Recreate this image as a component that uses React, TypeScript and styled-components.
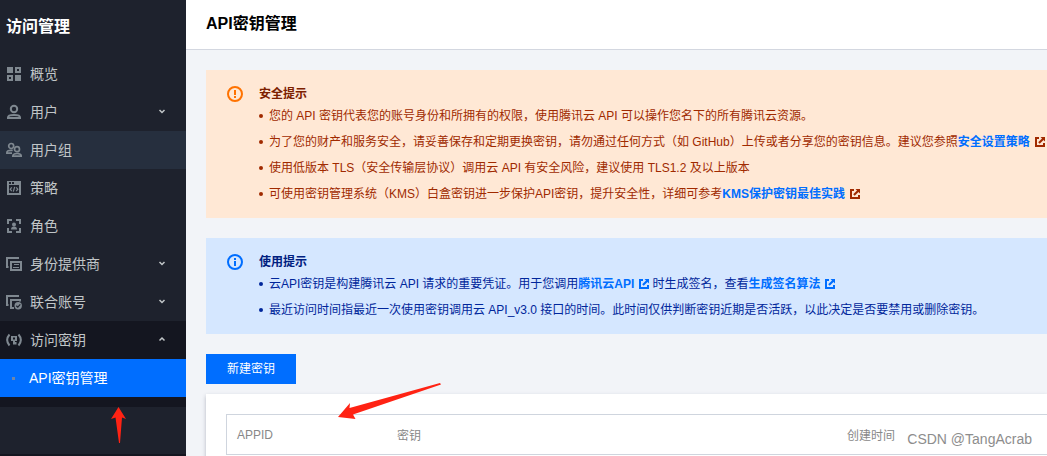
import React from "react";
import styled, { createGlobalStyle } from "styled-components";

const GlobalStyle = createGlobalStyle`
  * { box-sizing: border-box; }
  body {
    margin: 0;
    background: #f2f4f8;
    font-family: "Liberation Sans", "Noto Sans CJK SC", sans-serif;
    font-size: 12px;
  }
  ul { margin: 0; padding: 0; list-style: none; }
`;

const Shell = styled.div`
  position: relative;
  display: flex;
  height: 100vh;
  overflow: hidden;
`;

const Sidebar = styled.nav`
  flex: 0 0 186px;
  display: flex;
  flex-direction: column;
  background: #1e222d;
  color: #c1c6c8;
`;

const SidebarTitle = styled.h2`
  margin: 0;
  padding: 15px 6px 16px;
  font-size: 16px;
  line-height: 24px;
  font-weight: bold;
  color: #fff;
`;

const SidebarFoot = styled.div`
  margin-top: auto;
  height: 2px;
  background: #141620;
`;

const MenuItem = styled.li<{ $open?: boolean }>`
  background: ${(p) => (p.$open ? "#141620" : "transparent")};
  padding-bottom: ${(p) => (p.$open ? "10px" : "0")};
`;

const MenuLink = styled.a<{ $tone?: "hover" | "active" }>`
  display: flex;
  align-items: center;
  gap: 8px;
  height: 38px;
  padding: 0 18px 0 6px;
  font-size: 14px;
  line-height: 20px;
  text-decoration: none;
  color: ${(p) => (p.$tone === "active" ? "#fff" : "inherit")};
  background: ${(p) =>
    p.$tone === "active" ? "#006eff" : p.$tone === "hover" ? "#262f3e" : "transparent"};
`;

const MenuIcon = styled.svg`
  flex: none;
  width: 16px;
  height: 16px;
  color: #7f8890;
`;

const Chevron = styled.svg`
  width: 12px;
  height: 12px;
  margin-left: auto;
`;

const Bullet = styled.span`
  flex: 0 0 15px;
  display: flex;
  justify-content: center;
  &::before {
    content: "";
    width: 3px;
    height: 3px;
    background: #6f86a8;
  }
`;

const Main = styled.main`
  flex: 1;
  min-width: 0;
`;

const PageHeader = styled.header`
  padding: 12px 20px 13px;
  background: #fff;
  border-bottom: 1px solid #d3d7e0;
`;

const PageTitle = styled.h1`
  margin: 0;
  font-size: 16px;
  line-height: 24px;
  font-weight: bold;
  color: #000;
`;

const Content = styled.div`
  display: flex;
  flex-direction: column;
  gap: 20px;
  padding: 20px 0 0 20px;
`;

const Alert = styled.section<{ $kind: "warning" | "info" }>`
  display: flex;
  gap: 16px;
  padding: 12px 0 14px 21px;
  background: ${(p) => (p.$kind === "warning" ? "#ffe8d5" : "#d5e7ff")};
  color: ${(p) => (p.$kind === "warning" ? "#a02a00" : "#00269b")};
  white-space: nowrap;
`;

const AlertIcon = styled.svg`
  flex: none;
  width: 16px;
  height: 16px;
  margin-top: 4px;
`;

const AlertTitle = styled.h3<{ $kind: "warning" | "info" }>`
  margin: 0;
  font-size: 12px;
  line-height: 24px;
  font-weight: bold;
  color: ${(p) => (p.$kind === "warning" ? "#7c2000" : "#002080")};
`;

const AlertList = styled.ul`
  && {
    display: flex;
    flex-direction: column;
    gap: 6px;
  }
`;

const AlertItem = styled.li`
  display: flex;
  align-items: center;
  line-height: 20px;
  &::before {
    content: "";
    flex: none;
    width: 4px;
    height: 4px;
    margin-right: 6px;
    border-radius: 50%;
    background: currentColor;
  }
`;

const DocLink = styled.a`
  font-weight: bold;
  text-decoration: none;
  color: #006eff;
`;

const LinkIcon = styled.svg<{ $kind: "warning" | "info" }>`
  width: 10px;
  height: 10px;
  margin: 0 3px 0 5px;
  vertical-align: -1px;
  color: ${(p) => (p.$kind === "warning" ? "#a02a00" : "#006eff")};
`;

const PrimaryButton = styled.button`
  align-self: flex-start;
  height: 30px;
  padding: 0 21px;
  border: 0;
  background: #006eff;
  color: #fff;
  font-family: inherit;
  font-size: 12px;
  line-height: 28px;
`;

const Card = styled.section`
  margin-top: -10px;
  padding: 20px 0 20px 20px;
  background: #fff;
  box-shadow: 0 2px 4px rgba(54, 58, 80, 0.32);
`;

const KeyTable = styled.table`
  width: 100%;
  border-collapse: separate;
  border-spacing: 0;
  table-layout: fixed;
  border-top: 1px solid #cfd5de;
  border-left: 1px solid #cfd5de;
`;

const HeadCell = styled.th<{ $width?: string }>`
  width: ${(p) => p.$width ?? "auto"};
  height: 40px;
  padding: 0 10px;
  border-bottom: 1px solid #cfd5de;
  text-align: left;
  font-weight: normal;
  color: #888;
`;

const Arrow = styled.svg<{ $left: number; $top: number }>`
  position: absolute;
  left: ${(p) => p.$left}px;
  top: ${(p) => p.$top}px;
  fill: #ff2314;
  pointer-events: none;
`;

const Watermark = styled.span`
  position: absolute;
  right: 15px;
  bottom: 9px;
  font-size: 14px;
  line-height: 16px;
  color: #8d8d8d;
`;

const icons: Record<string, React.ReactNode> = {
  overview: (
    <path
      fill="currentColor"
      fillRule="evenodd"
      d="M1 1h6v6H1zM9 1h6v6H9zm2 2v2h2V3zM1 9h6v6H1zm2 2v2h2v-2zM9 9h6v6H9z"
    />
  ),
  user: (
    <g fill="none" stroke="currentColor" strokeWidth="2">
      <circle cx="8" cy="5" r="3.200" />
      <path d="M2 14v-.6C2 11.700 4.200 11 8 11s6 .7 6 2.400v.6z" />
    </g>
  ),
  group: (
    <g fill="none" stroke="currentColor" strokeWidth="1.700">
      <circle cx="5.200" cy="4" r="2.500" />
      <path d="M6 11.200H.9v-.7C.9 9 2.500 8.300 5.200 8.300h1.500" />
      <circle cx="11" cy="7.200" r="2.500" />
      <path d="M6.800 14.200c0-2 1.700-2.700 4.300-2.700s4.100.7 4.100 2.700z" />
    </g>
  ),
  policy: (
    <>
      <path
        fill="currentColor"
        fillRule="evenodd"
        d="M1 1h14v14H1zM3 2v2h2V2zM6 2v2h2V2zM3 5v8h10V5z"
      />
      <path
        d="M5.800 7.300 4.200 9.200l1.600 1.900M10.200 7.300l1.600 1.900-1.600 1.900M8.700 6.800 7.300 11.600"
        fill="none"
        stroke="currentColor"
        strokeWidth="1.200"
      />
    </>
  ),
  role: (
    <>
      <path
        d="M6 2H2v4M10 2h4v4M2 10v4h4M14 10v4h-4"
        fill="none"
        stroke="currentColor"
        strokeWidth="2"
      />
      <circle cx="8" cy="6.500" r="2" fill="currentColor" />
      <path d="M5 11.500c0-2 1-3 3-3s3 1 3 3z" fill="currentColor" />
    </>
  ),
  provider: (
    <g fill="none" stroke="currentColor" strokeWidth="2">
      <path d="M2.500 11H1V2h12" />
      <path d="M5 6h10v8H5z" />
      <path d="M8 8.500h5M7 11.500h6" strokeWidth="1" />
    </g>
  ),
  federated: (
    <>
      <g fill="none" stroke="currentColor" strokeWidth="2">
        <path d="M2.500 11H1V2h12" />
        <path d="M8 14H5V6h9v1.500" />
      </g>
      <circle cx="12.200" cy="11.700" r="3.700" fill="currentColor" />
      <path d="m10.300 11.700 1.500 1.400 2.500-2.700" fill="none" stroke="#1e222d" strokeWidth="1.200" />
    </>
  ),
  key: (
    <>
      <path
        d="M3.500 2.500c-3 3.500-3 7.500 0 11M12.500 2.500c3 3.500 3 7.500 0 11"
        fill="none"
        stroke="currentColor"
        strokeWidth="2"
      />
      <path
        fill="currentColor"
        fillRule="evenodd"
        d="M5 4h6v5H9v1h1.500v2.500H7V9H5zm2 1.500v2h2v-2z"
      />
    </>
  ),
};

type Item = {
  icon: string;
  label: string;
  expandable?: boolean;
  hovered?: boolean;
  child?: string;
};

const menu: Item[] = [
  { icon: "overview", label: "概览" },
  { icon: "user", label: "用户", expandable: true },
  { icon: "group", label: "用户组", hovered: true },
  { icon: "policy", label: "策略" },
  { icon: "role", label: "角色" },
  { icon: "provider", label: "身份提供商", expandable: true },
  { icon: "federated", label: "联合账号", expandable: true },
  { icon: "key", label: "访问密钥", expandable: true, child: "API密钥管理" },
];

function ExternalIcon({ kind }: { kind: "warning" | "info" }) {
  return (
    <LinkIcon $kind={kind} viewBox="0 0 10 10" aria-hidden="true">
      <path
        d="M4 0v2H2v6h6V6h2v4H0V0zM5.500 0H10v4.500L8.500 3 4.700 6.800 3.200 5.300 7 1.500z"
        fill="currentColor"
      />
    </LinkIcon>
  );
}

function StatusIcon({ kind }: { kind: "warning" | "info" }) {
  const color = kind === "warning" ? "#ff7200" : "#006eff";
  return (
    <AlertIcon viewBox="0 0 16 16" aria-hidden="true">
      <circle cx="8" cy="8" r="7" fill="none" stroke={color} strokeWidth="2" />
      {kind === "warning" ? (
        <path d="M7 4h2v5H7zM7 10h2v2H7z" fill={color} />
      ) : (
        <path d="M7 4h2v2H7zM7 7h2v5H7z" fill={color} />
      )}
    </AlertIcon>
  );
}

export default function App() {
  return (
    <Shell>
      <GlobalStyle />
      <Sidebar>
        <SidebarTitle>访问管理</SidebarTitle>
        <ul>
          {menu.map((m) => (
            <MenuItem key={m.label} $open={!!m.child}>
              <MenuLink href="#" $tone={m.hovered ? "hover" : undefined}>
                <MenuIcon viewBox="0 0 16 16" aria-hidden="true">
                  {icons[m.icon]}
                </MenuIcon>
                {m.label}
                {m.expandable && (
                  <Chevron viewBox="0 0 12 12" aria-hidden="true">
                    <path
                      d={m.child ? "M3.500 6.500 6 4l2.500 2.500" : "M3.500 4 6 6.500 8.500 4"}
                      fill="none"
                      stroke="currentColor"
                      strokeWidth="1.500"
                    />
                  </Chevron>
                )}
              </MenuLink>
              {m.child && (
                <MenuLink href="#" $tone="active" aria-current="page">
                  <Bullet />
                  {m.child}
                </MenuLink>
              )}
            </MenuItem>
          ))}
        </ul>
        <SidebarFoot />
      </Sidebar>

      <Main>
        <PageHeader>
          <PageTitle>API密钥管理</PageTitle>
        </PageHeader>
        <Content>
          <Alert $kind="warning">
            <StatusIcon kind="warning" />
            <div>
              <AlertTitle $kind="warning">安全提示</AlertTitle>
              <AlertList>
                <AlertItem>
                  <span>
                    您的 API 密钥代表您的账号身份和所拥有的权限，使用腾讯云 API 可以操作您名下的所有腾讯云资源。
                  </span>
                </AlertItem>
                <AlertItem>
                  <span>
                    为了您的财产和服务安全，请妥善保存和定期更换密钥，请勿通过任何方式（如 GitHub）上传或者分享您的密钥信息。建议您参照
                    <DocLink href="#">
                      安全设置策略
                      <ExternalIcon kind="warning" />
                    </DocLink>
                  </span>
                </AlertItem>
                <AlertItem>
                  <span>
                    使用低版本 TLS（安全传输层协议）调用云 API 有安全风险，建议使用 TLS1.2 及以上版本
                  </span>
                </AlertItem>
                <AlertItem>
                  <span>
                    可使用密钥管理系统（KMS）白盒密钥进一步保护API密钥，提升安全性，详细可参考
                    <DocLink href="#">
                      KMS保护密钥最佳实践
                      <ExternalIcon kind="warning" />
                    </DocLink>
                  </span>
                </AlertItem>
              </AlertList>
            </div>
          </Alert>

          <Alert $kind="info">
            <StatusIcon kind="info" />
            <div>
              <AlertTitle $kind="info">使用提示</AlertTitle>
              <AlertList>
                <AlertItem>
                  <span>
                    云API密钥是构建腾讯云 API 请求的重要凭证。用于您调用
                    <DocLink href="#">
                      腾讯云API
                      <ExternalIcon kind="info" />
                    </DocLink>
                    时生成签名，查看
                    <DocLink href="#">
                      生成签名算法
                      <ExternalIcon kind="info" />
                    </DocLink>
                  </span>
                </AlertItem>
                <AlertItem>
                  <span>
                    最近访问时间指最近一次使用密钥调用云 API_v3.0 接口的时间。此时间仅供判断密钥近期是否活跃，以此决定是否要禁用或删除密钥。
                  </span>
                </AlertItem>
              </AlertList>
            </div>
          </Alert>

          <PrimaryButton type="button">新建密钥</PrimaryButton>

          <Card>
            <KeyTable>
              <thead>
                <tr>
                  <HeadCell scope="col" $width="160px">APPID</HeadCell>
                  <HeadCell scope="col" $width="450px">密钥</HeadCell>
                  <HeadCell scope="col">创建时间</HeadCell>
                </tr>
              </thead>
            </KeyTable>
          </Card>
        </Content>
      </Main>

      <Arrow $left={111} $top={407} width="15" height="37" viewBox="0 0 15 37" aria-hidden="true">
        <path d="M7.500 0 15 12l-4-1.500L9 36H8L4.500 10.500 0 12z" />
      </Arrow>
      <Arrow $left={338} $top={383} width="104" height="37" viewBox="0 0 104 37" aria-hidden="true">
        <path d="M0 34 12 20l-.5 5L102 0l1 1.500L15 31.500l2.500 4.500z" />
      </Arrow>
      <Watermark>CSDN @TangAcrab</Watermark>
    </Shell>
  );
}
